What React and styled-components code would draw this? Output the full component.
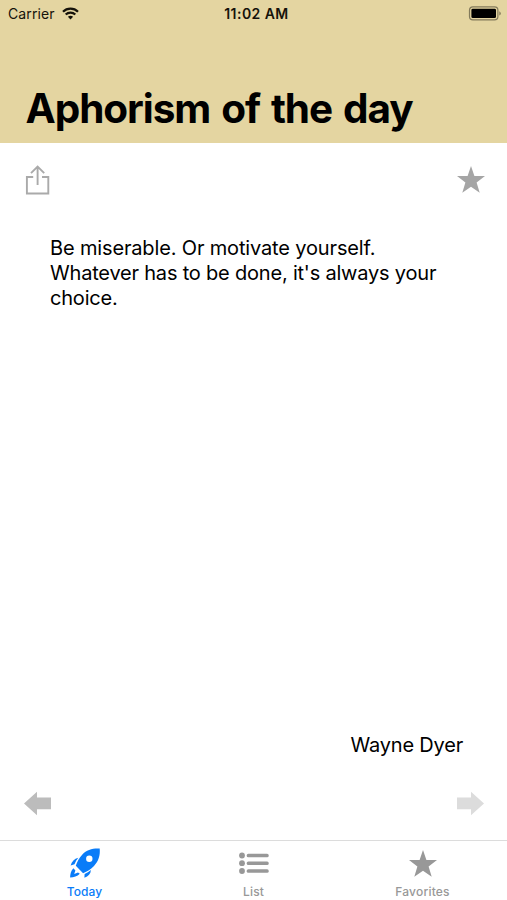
import React from 'react';
import styled, { createGlobalStyle } from 'styled-components';

const GlobalStyle = createGlobalStyle`
  * { box-sizing: border-box; }
  body {
    margin: 0;
    background: #fff;
    color: #000;
    font-family: Inter, "Liberation Sans", sans-serif;
    overflow: hidden;
  }
  svg { display: block; }
`;

const Screen = styled.div`
  width: 507px;
  height: 900px;
  display: flex;
  flex-direction: column;
  background: #fff;
`;

const Header = styled.header`
  height: 143px;
  flex: none;
  display: flex;
  flex-direction: column;
  justify-content: space-between;
  background: #e4d5a1;
`;

const StatusBar = styled.div`
  height: 27px;
  padding: 0 6px 0 8px;
  display: grid;
  grid-template-columns: 1fr auto 1fr;
  align-items: center;
  color: #15120a;
`;

const Carrier = styled.div`
  display: flex;
  align-items: center;
  gap: 7px;
  font-size: 14px;
  letter-spacing: 0.1px;
`;

const Clock = styled.div`
  padding-left: 4px;
  font-size: 14px;
  font-weight: 600;
  letter-spacing: 0.45px;
`;

const Battery = styled.div`
  display: flex;
  justify-content: flex-end;
`;

const Title = styled.h1`
  margin: 0;
  padding: 0 0 9px 25.5px;
  font-size: 40.5px;
  line-height: 50px;
  font-weight: 700;
  letter-spacing: -1.06px;
  word-spacing: 2.4px;
  white-space: nowrap;
`;

const Toolbar = styled.div`
  flex: none;
  height: ${(p) => p.$height}px;
  padding: 0 ${(p) => p.$right}px ${(p) => p.$lift || 0}px 23px;
  display: flex;
  align-items: center;
  justify-content: space-between;
`;

const IconButton = styled.button`
  border: 0;
  padding: 0;
  background: none;
  color: ${(p) => p.$color};
`;

const Quote = styled.main`
  flex: 1;
  display: flex;
  flex-direction: column;
  justify-content: space-between;
  padding: 19px 44px 15px 50px;
  font-size: 20px;
  line-height: 25px;
`;

const Line = styled.span`
  display: block;
  white-space: nowrap;
  letter-spacing: ${(p) => p.$track || 0}px;
`;

const Author = styled.div`
  align-self: flex-end;
  letter-spacing: -0.2px;
`;

const TabBar = styled.nav`
  flex: none;
  height: 60px;
  border-top: 1px solid #dcdcdc;
  display: grid;
  grid-template-columns: repeat(3, 1fr);
`;

const Tab = styled.div`
  display: flex;
  flex-direction: column;
  align-items: center;
  padding-top: 6px;
  gap: 6px;
  color: ${(p) => (p.$active ? '#0a7cf8' : '#989898')};
  font-size: 12px;
  line-height: 14px;
  font-weight: 500;
  letter-spacing: ${(p) => p.$track || 0}px;
`;

const WifiIcon = () => (
  <svg width="17" height="13" viewBox="0 0 17 13" fill="none" stroke="currentColor" strokeWidth="2.2">
    <path d="M1 4.7C5.1.5 11.9.5 16 4.7M3.7 7.5c2.7-2.6 6.9-2.6 9.6 0" />
    <path d="M8.5 12.4 5.9 9.7c1.5-1.4 3.7-1.4 5.2 0z" fill="currentColor" stroke="none" />
  </svg>
);

const BatteryIcon = () => (
  <svg width="33" height="15" viewBox="0 0 33 15">
    <rect x="1.5" y=".9" width="28.4" height="13" rx="3.4" fill="none" stroke="#827a5b" strokeWidth="1.2" />
    <rect x="3.4" y="2.7" width="24.6" height="9.4" rx="1.4" fill="#000" />
    <path d="M31.3 5.3q1.5.7 1.5 2.1t-1.5 2.1z" fill="#827a5b" />
  </svg>
);

const ShareIcon = () => (
  <svg width="30" height="34" viewBox="0 0 30 34" fill="none" stroke="currentColor" strokeWidth="1.9">
    <path d="M10.2 14H3.9v16.5h21.4V14H19M14.6 22V4M8 10.2l6.6-6.6 6.6 6.6" />
  </svg>
);

const StarIcon = () => (
  <svg width="30" height="30" viewBox="0 0 30 30" fill="currentColor">
    <path d="M15 1l3.4 9.9 10.6.2-8.4 6.4 3.1 10.3L15 21.7l-8.7 6.1 3.1-10.3L1 11.1l10.6-.2z" />
  </svg>
);

const ArrowIcon = ({ right }) => (
  <svg width="29" height="25" viewBox="0 0 29 25" fill="currentColor">
    <path d={right ? 'M28 12.5 15 .8v5.8H1v11.6h14v6z' : 'M1 12.5 14 .8v5.8h14v11.6H14v6z'} />
  </svg>
);

const RocketIcon = () => (
  <svg width="32" height="32" viewBox="0 0 32 32" fill="currentColor">
    <path
      fillRule="evenodd"
      d="M30.7 1.6C23.5 1.2 17.5 3 13.4 7.5 10 11.1 8 15 6.8 18.7l7.3 7.6c4.1-1.8 7.9-4.2 10.9-7.3 4.5-4.8 6.4-10.3 5.7-17.4zM20.3 8.5a3.2 3.2 0 1 0 0 6.4 3.2 3.2 0 0 0 0-6.4z"
    />
    <path d="M9.3 10.8c-4 .9-6.5 3.6-7.7 7.8l3.9-1.3c.9-2.4 2.2-4.6 3.8-6.5zM21.9 22.9c-.2 3.8-2.5 6.5-6.5 7.9l.2-3.8c2.3-1 4.4-2.4 6.3-4.1zM4.4 21.2c-2.5 2.5-3.2 5.6-3.3 9.4 3.8-.4 7.2-1.2 9.7-3.9l-1.8-1.3-3.8 1.7 1.2-3.6z" />
  </svg>
);

const ListIcon = () => (
  <svg width="32" height="32" viewBox="0 0 32 32" fill="currentColor">
    {[8.5, 16.2, 24].map((y) => (
      <g key={y}>
        <circle cx="4" cy={y} r="2.9" />
        <rect x="8.7" y={y - 1.8} width="22" height="3.6" rx="1.6" />
      </g>
    ))}
  </svg>
);

const TabStar = styled.div`
  height: 32px;
  padding-top: 2px;
`;

export default function App() {
  return (
    <>
      <GlobalStyle />
      <Screen>
        <Header>
          <StatusBar>
            <Carrier>Carrier <WifiIcon /></Carrier>
            <Clock>11:02 AM</Clock>
            <Battery><BatteryIcon /></Battery>
          </StatusBar>
          <Title>Aphorism of the day</Title>
        </Header>
        <Toolbar $height={74} $right={21}>
          <IconButton $color="#aaa" aria-label="Share"><ShareIcon /></IconButton>
          <IconButton $color="#a5a5a5" aria-label="Add to favorites"><StarIcon /></IconButton>
        </Toolbar>
        <Quote>
          <div>
            <Line $track={-0.15}>Be miserable. Or motivate yourself.</Line>
            <Line $track={-0.2}>Whatever has to be done, it's always your</Line>
            <Line $track={-0.2}>choice.</Line>
          </div>
          <Author>Wayne Dyer</Author>
        </Quote>
        <Toolbar $height={67} $right={22} $lift={6}>
          <IconButton $color="#bcbcbc" aria-label="Previous"><ArrowIcon /></IconButton>
          <IconButton $color="#dcdcdc" aria-label="Next"><ArrowIcon right /></IconButton>
        </Toolbar>
        <TabBar>
          <Tab $active $track={0.1}><RocketIcon />Today</Tab>
          <Tab $track={0.2}><ListIcon />List</Tab>
          <Tab $track={0.2}><TabStar><StarIcon /></TabStar>Favorites</Tab>
        </TabBar>
      </Screen>
    </>
  );
}
